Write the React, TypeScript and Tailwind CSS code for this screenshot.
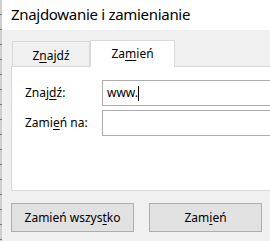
import React from 'react';

const font = { fontFamily: '"Noto Sans", "Segoe UI", sans-serif' };

// underline one letter, like a Windows accelerator key
const Acc: React.FC<{ text: string; at: number }> = ({ text, at }) => (
    <>
        {text.slice(0, at)}
        <span className="underline underline-offset-2">{text[at]}</span>
        {text.slice(at + 1)}
    </>
);

const App: React.FC = () => {
    return (
        <div className="w-[270px] h-[241px] flex overflow-hidden text-black" style={font}>
            {/* edge of the sheet behind the dialog */}
            <div className="w-[2px] h-full bg-[repeating-linear-gradient(180deg,#cfcfcf_0px,#cfcfcf_14px,#6b7b6b_14px,#6b7b6b_15px)]" />

            <div className="flex-1 flex flex-col bg-[#f0f0f0] overflow-hidden">
                <div className="h-[30px] shrink-0 bg-white pl-[9px] pt-[3px] text-[15px] leading-[22px] tracking-[-0.3px]">
                    Znajdowanie i zamienianie
                </div>

                <div className="pl-[9px] -mr-[6px] pt-[9px]">
                    {/* tabs */}
                    <div className="flex items-end h-[27px] text-[12px]">
                        <div className="w-[78px] h-[25px] ml-[1px] border border-b-0 border-[#d9d9d9] flex items-center justify-center pt-[3px]">
                            <Acc text="Znajdź" at={1} />
                        </div>
                        <div className="w-[85px] h-[27px] -mb-[1px] relative z-10 bg-white border border-b-0 border-[#d9d9d9] flex items-center justify-center pb-[1px]">
                            <Acc text="Zamień" at={2} />
                        </div>
                    </div>

                    {/* panel */}
                    <div className="h-[125px] bg-white border border-[#d9d9d9] pl-[13px] pt-[13px] text-[12px]">
                        <div className="flex items-center h-[26px]">
                            <div className="w-[77px]">
                                <Acc text="Znajdź:" at={4} />
                            </div>
                            <div className="flex-1 h-[26px] border border-[#adadad] pl-[4px] flex items-center">
                                <span>www.</span>
                                <span className="w-[1px] h-[15px] bg-black" />
                            </div>
                        </div>
                        <div className="flex items-center h-[26px] mt-[4px]">
                            <div className="w-[77px]">
                                <Acc text="Zamień na:" at={4} />
                            </div>
                            <div className="flex-1 h-[26px] border border-[#adadad]" />
                        </div>
                    </div>
                </div>

                {/* buttons */}
                <div className="flex pl-[9px] pt-[12px] gap-[15px] text-[12px]">
                    <button className="w-[123px] h-[29px] bg-[#e1e1e1] border border-[#adadad] flex items-center justify-center">
                        <Acc text="Zamień wszystko" at={12} />
                    </button>
                    <button className="w-[113px] h-[29px] bg-[#e1e1e1] border border-[#adadad] flex items-center justify-center">
                        <Acc text="Zamień" at={3} />
                    </button>
                </div>
            </div>
        </div>
    );
};

export default App;
